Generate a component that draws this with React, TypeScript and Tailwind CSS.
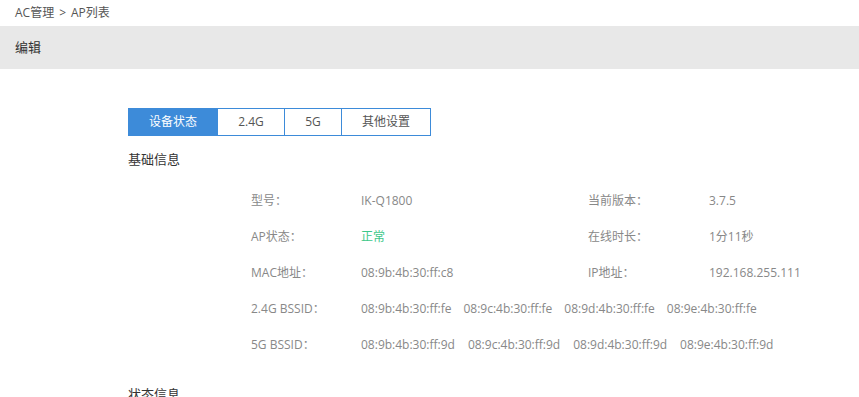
import React, { useState } from 'react';

const tabs = [
  { label: '设备状态', width: 'w-[90px]' },
  { label: '2.4G', width: 'w-[67px]' },
  { label: '5G', width: 'w-[57px]' },
  { label: '其他设置', width: 'w-[89px]' },
];

const bssid24 = ['08:9b:4b:30:ff:fe', '08:9c:4b:30:ff:fe', '08:9d:4b:30:ff:fe', '08:9e:4b:30:ff:fe'];
const bssid5 = ['08:9b:4b:30:ff:9d', '08:9c:4b:30:ff:9d', '08:9d:4b:30:ff:9d', '08:9e:4b:30:ff:9d'];

const Row: React.FC<{ children: React.ReactNode }> = ({ children }) => (
  <div className="flex items-center h-[36px]">{children}</div>
);

const Label: React.FC<{ children: React.ReactNode; w?: string }> = ({ children, w = 'w-[110px]' }) => (
  <span className={`${w} shrink-0 text-[#888]`}>{children}</span>
);

export default function App() {
  const [active, setActive] = useState(0);

  return (
    <div className="w-[859px] h-[397px] overflow-hidden bg-white text-[12px] font-['Open_Sans','Noto_Sans_CJK_SC',sans-serif]">
      {/* Breadcrumb */}
      <div className="h-[26px] px-[15px] flex items-center gap-[5px] text-[#555]">
        <span>AC管理</span>
        <span>&gt;</span>
        <span>AP列表</span>
      </div>

      {/* Header */}
      <div className="h-[43px] px-[15px] flex items-center bg-[#e8e8e8] text-[13px] text-[#333]">
        编辑
      </div>

      <div className="pl-[128px] pt-[39px]">
        {/* Tabs */}
        <div className="flex">
          {tabs.map((t, i) => (
            <button
              key={t.label}
              onClick={() => setActive(i)}
              className={`${t.width} h-[28px] flex items-center justify-center border-y border-r border-[#3d8bd9] ${
                i === 0 ? 'border-l' : ''
              } ${active === i ? 'bg-[#3d8bd9] text-white' : 'bg-white text-[#555]'}`}
            >
              {t.label}
            </button>
          ))}
        </div>

        <div className="mt-[14px] h-[20px] flex items-center text-[13px] text-[#333]">基础信息</div>

        {/* Basic info */}
        <div className="pl-[123px] mt-[13px] text-[#888]">
          <Row>
            <Label>型号：</Label>
            <span className="w-[227px] shrink-0">IK-Q1800</span>
            <Label w="w-[121px]">当前版本：</Label>
            <span>3.7.5</span>
          </Row>
          <Row>
            <Label>AP状态：</Label>
            <span className="w-[227px] shrink-0 text-[#3ec88a]">正常</span>
            <Label w="w-[121px]">在线时长：</Label>
            <span>1分11秒</span>
          </Row>
          <Row>
            <Label>MAC地址：</Label>
            <span className="w-[227px] shrink-0">08:9b:4b:30:ff:c8</span>
            <Label w="w-[121px]">IP地址：</Label>
            <span>192.168.255.111</span>
          </Row>
          <Row>
            <Label>2.4G BSSID：</Label>
            <div className="flex gap-[12px]">
              {bssid24.map((b) => (
                <span key={b}>{b}</span>
              ))}
            </div>
          </Row>
          <Row>
            <Label>5G BSSID：</Label>
            <div className="flex gap-[13px]">
              {bssid5.map((b) => (
                <span key={b}>{b}</span>
              ))}
            </div>
          </Row>
        </div>

        <div className="mt-[22px] h-[20px] flex items-center text-[13px] text-[#333]">状态信息</div>
      </div>
    </div>
  );
}
